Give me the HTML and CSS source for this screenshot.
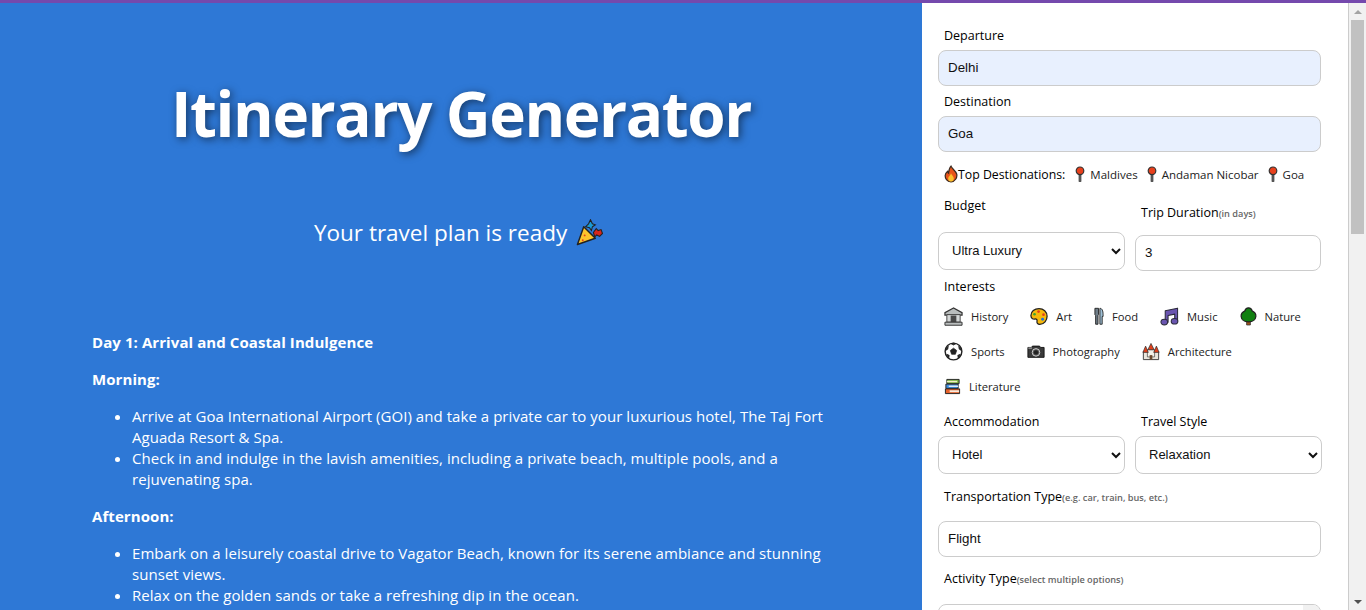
FILE: index.html
```html
<!DOCTYPE html>
<html lang="en">
<head>
<meta charset="utf-8">
<title>Itinerary Generator</title>
<link rel="stylesheet" href="styles.css">
</head>
<body>
<svg class="sprites" width="0" height="0" aria-hidden="true">
  <symbol id="flame" viewBox="0 0 16 20"><path d="M8 1c1 3 5 5 6.500 9 1 4-2 9-6.500 9S.8 15 1.500 11c.3-2 1.500-3 2.500-4 .2 1 .6 1.600 1.200 2C5.500 6 6 3 8 1z" fill="#e8541a" stroke="#3a2a20" stroke-width="1.400"/><path d="M8 9c.6 2 3.200 3.500 3.200 6S9.800 18.500 8 18.500 4.800 17.500 4.800 15 7.500 11.500 8 9z" fill="#fbc02d"/></symbol>
  <symbol id="pin" viewBox="0 0 10 16"><path d="M5 8v7" stroke="#555" stroke-width="2.800" stroke-linecap="round"/><circle cx="5" cy="4.800" r="3.800" fill="#e8401c" stroke="#333" stroke-width="1.200"/></symbol>
  <symbol id="museum" viewBox="0 0 20 20"><path d="M10 1 1 6v2.500h18V6z" fill="#b9bdbd" stroke="#333" stroke-width="1.300"/><path d="M3 8h14v8H3z" fill="#d5d8d8" stroke="#444"/><path d="M7 9h6v7H7z" fill="#4a4a4a"/><path d="M1 16h18v3.200H1z" fill="#b9bdbd" stroke="#333"/></symbol>
  <symbol id="palette" viewBox="0 0 20 20"><path d="M10 1.200C5 1.200 1 4.500 1 9c0 3 2.300 4 4.200 3.800 2.200-.2 3 .8 2.600 2.400-.4 1.700.6 3.600 3 3.600 5 0 8.200-4.400 8.200-9 0-5-4-8.600-9-8.600z" fill="#f6b80c" stroke="#222" stroke-width="1.400"/><circle cx="5" cy="7.500" r="1.500" fill="#3aa635"/><circle cx="9.500" cy="4.500" r="1.500" fill="#e2401b"/><circle cx="15" cy="8" r="1.500" fill="#e2401b"/><circle cx="14" cy="13" r="1.600" fill="#1d70d6"/></symbol>
  <symbol id="cutlery" viewBox="0 0 11 20"><path d="M1 1h4v7l-.6 1v9.500H1.800V9L1 8z" fill="#6f7d88" stroke="#222"/><path d="M6.500 1c2.500 0 3.500 3 3.500 7v2H9v8.500H6.500z" fill="#9fc0d6" stroke="#222"/></symbol>
  <symbol id="notes" viewBox="0 0 20 20"><path d="M5.500 4 18.500 1.200V15h-3V7.500l-7 1.500v7h-3z" fill="#6a55b0" stroke="#2b2b3a" stroke-width="1.100" stroke-linejoin="round"/><ellipse cx="4.500" cy="15.800" rx="3.500" ry="3" fill="#6a55b0" stroke="#2b2b3a" stroke-width="1.100"/><ellipse cx="15.300" cy="15" rx="3.500" ry="3" fill="#6a55b0" stroke="#2b2b3a" stroke-width="1.100"/></symbol>
  <symbol id="tree" viewBox="0 0 18 20"><path d="M7 14h4v5H7z" fill="#a0521d" stroke="#333" stroke-width=".8"/><path d="M9 .8c2.200 0 3.500 1.500 3.800 3.200C15 5 17 7.500 16.800 10c-.3 3-3 5.800-7.800 5.800S1.500 13 1.200 10C1 7.500 3 5 5.200 4 5.500 2.300 6.800.8 9 .8z" fill="#118011" stroke="#222" stroke-width="1.300"/></symbol>
  <symbol id="ball" viewBox="0 0 20 20"><circle cx="10" cy="10" r="8.800" fill="#fff" stroke="#222" stroke-width="1.500"/><path d="m10 6.500 3.300 2.400-1.300 4H8l-1.300-4zM7.500 1.800 10 3.200l2.500-1.400L10 1.200zM1.500 9l2.500-1.500.5-3L2.500 6.500zM18.500 9 16 7.500l-.5-3 2 2zM5 17l.5-3-2.500-1 .8 2.500zM15 17l-.5-3 2.500-1-.8 2.500z" fill="#222" stroke="#222" stroke-width=".8"/></symbol>
  <symbol id="camera" viewBox="0 0 20 16"><path d="M1 3.500h4l1-1.500h8l1 1.500h4v11H1z" fill="#3a3a3a" stroke="#111"/><path d="M1.500 3.500h4v1.500h-4z" fill="#999"/><circle cx="10" cy="9" r="4.200" fill="#555" stroke="#ddd" stroke-width="1"/><circle cx="10" cy="9" r="2.400" fill="#222"/></symbol>
  <symbol id="castle" viewBox="0 0 20 20"><path d="M1.500 10h17v9h-17z" fill="#e9e6dc" stroke="#333"/><path d="M6 8h8v8H6z" fill="#f4f2ea" stroke="#333" stroke-width=".7"/><path d="M8.500 14h3v5h-3z" fill="#6b4a2e"/><path d="M10 1 6.500 8h7zM4 4 1 11h6zM16 4l-3 7h6z" fill="#e2401b" stroke="#333" stroke-width=".8"/></symbol>
  <symbol id="books" viewBox="0 0 18 18"><path d="M3 1.500h13V6H3z" fill="#7cb342" stroke="#222"/><path d="M3 3h11v1.500H3z" fill="#f3efc8"/><path d="M2 6.500h13V11H2z" fill="#3d8fe0" stroke="#222"/><path d="M5 8h10v1.500H5z" fill="#e8eef5"/><path d="M1.500 11.500h15v5h-15z" fill="#e8622a" stroke="#222"/><path d="M6 13h10v2H6z" fill="#f6ece0"/></symbol>
  <symbol id="popper" viewBox="0 0 28 28"><path d="M1.500 26.500 8 8l12 12z" fill="#fcc52c" stroke="#222" stroke-width="1.500" stroke-linejoin="round"/><path d="m15 .8 2 4.200 3 1-3 2-1 4-2-3-4-1 3-3z" fill="#1a9ad6" stroke="#222" stroke-width="1.100"/><path d="m18 14 3-4 2 2 3-1 1.500 4-3 3-3-1.500-2 2z" fill="#d8261c" stroke="#222" stroke-width="1.100"/><circle cx="9" cy="17" r="1" fill="#e2401b"/><circle cx="7" cy="22" r="1" fill="#e2401b"/></symbol>
</svg>
<div class="topbar"></div>
<main class="layout">
  <section class="result">
    <h1 class="title">Itinerary Generator</h1>
    <h2 class="subtitle">Your travel plan is ready <svg class="popper"><use href="#popper"/></svg></h2>
    <div class="plan">
      <p><strong>Day 1: Arrival and Coastal Indulgence</strong></p>
      <p><strong>Morning:</strong></p>
      <ul>
        <li>Arrive at Goa International Airport (GOI) and take a private car to your luxurious hotel, The Taj Fort Aguada Resort &amp; Spa.</li>
        <li>Check in and indulge in the lavish amenities, including a private beach, multiple pools, and a rejuvenating spa.</li>
      </ul>
      <p><strong>Afternoon:</strong></p>
      <ul>
        <li>Embark on a leisurely coastal drive to Vagator Beach, known for its serene ambiance and stunning sunset views.</li>
        <li>Relax on the golden sands or take a refreshing dip in the ocean.</li>
      </ul>
    </div>
  </section>
  <aside class="panel">
    <form class="form">
      <label class="label">Departure</label>
      <input class="field filled" value="Delhi">
      <label class="label">Destination</label>
      <input class="field filled" value="Goa">
      <div class="top">
        <svg class="flame"><use href="#flame"/></svg><span class="top-title">Top Destionations:</span>
        <span class="top-item"><svg class="pin"><use href="#pin"/></svg>Maldives</span>
        <span class="top-item"><svg class="pin"><use href="#pin"/></svg>Andaman Nicobar</span>
        <span class="top-item"><svg class="pin"><use href="#pin"/></svg>Goa</span>
      </div>
      <div class="pair">
        <div>
          <label class="label flush budget-label">Budget</label>
          <select class="field select"><option>Ultra Luxury</option></select>
        </div>
        <div class="duration">
          <label class="label flush duration-label">Trip Duration<small>(in days)</small></label>
          <input class="field number" value="3">
        </div>
      </div>
      <label class="label">Interests</label>
      <div class="chips">
        <span class="chip"><svg class="ico"><use href="#museum"/></svg>History</span>
        <span class="chip"><svg class="ico w18"><use href="#palette"/></svg>Art</span>
        <span class="chip"><svg class="ico w10"><use href="#cutlery"/></svg>Food</span>
        <span class="chip"><svg class="ico"><use href="#notes"/></svg>Music</span>
        <span class="chip"><svg class="ico w17"><use href="#tree"/></svg>Nature</span>
        <span class="chip"><svg class="ico"><use href="#ball"/></svg>Sports</span>
        <span class="chip"><svg class="ico w18"><use href="#camera"/></svg>Photography</span>
        <span class="chip"><svg class="ico w18"><use href="#castle"/></svg>Architecture</span>
        <span class="chip"><svg class="ico w17"><use href="#books"/></svg>Literature</span>
      </div>
      <div class="pair stay">
        <div>
          <label class="label flush stay-label">Accommodation</label>
          <select class="field select"><option>Hotel</option></select>
        </div>
        <div>
          <label class="label flush stay-label">Travel Style</label>
          <select class="field select"><option>Relaxation</option></select>
        </div>
      </div>
      <label class="label spaced">Transportation Type<small>(e.g. car, train, bus, etc.)</small></label>
      <input class="field" value="Flight">
      <label class="label activity">Activity Type<small>(select multiple options)</small></label>
      <div class="multi">
        <div class="multi-list"></div>
        <div class="multi-bar"></div>
      </div>
    </form>
  </aside>
  <div class="scrollbar" aria-hidden="true">
    <div class="sb-btn"><span class="sb-up"></span></div>
    <div class="sb-thumb"></div>
    <div class="sb-rest"></div>
    <div class="sb-btn"><span class="sb-down"></span></div>
  </div>
</main>
</body>
</html>
```
FILE: styles.css
```css
* { box-sizing: border-box; }
html, body { height: 100%; }
body {
  margin: 0;
  display: flex;
  flex-direction: column;
  overflow: hidden;
  font-family: "Open Sans", "Noto Sans", sans-serif;
  color: #111;
}
.sprites { position: absolute; }
.topbar {
  flex: 0 0 3px;
  background: #7549ad;
}
.layout { flex: 1; min-height: 0; display: flex; }

.result {
  flex: 0 0 922px;
  overflow: hidden;
  background: #2e78d6;
  color: #fff;
  padding-top: 70px;
}
.title {
  margin: 0;
  text-align: center;
  font-size: 62px;
  line-height: 80px;
  font-weight: 700;
  letter-spacing: -1.400px;
  text-shadow: 2px 2px 8px rgba(0, 0, 0, .55);
}
.subtitle {
  margin: 64px 0 0;
  padding-right: 5px;
  text-align: center;
  font-size: 22.500px;
  line-height: 32px;
  font-weight: 400;
}
.popper { width: 27px; height: 27px; margin-left: 3px; vertical-align: -5px; }
.plan {
  margin-top: 83px;
  padding: 0 92px;
  font-size: 15px;
  line-height: 21px;
  letter-spacing: .05px;
}
.plan strong { letter-spacing: .08px; }
.plan p { margin: 16px 0; }
.plan ul { margin: 16px 0; padding-left: 40px; }

.panel {
  flex: 1;
  min-width: 0;
  background: #fff;
  overflow: hidden;
}
.scrollbar {
  flex: 0 0 18px;
  display: flex;
  flex-direction: column;
  background: #f1f1f1;
  border-left: 1px solid #ccc;
}
.sb-btn {
  flex: 0 0 17px;
  display: flex;
  align-items: center;
  justify-content: center;
}
.sb-up, .sb-down {
  border-left: 4px solid transparent;
  border-right: 4px solid transparent;
}
.sb-up { border-bottom: 4px solid #a3a3a3; }
.sb-down { border-top: 4px solid #505050; }
.sb-thumb {
  flex: 0 0 214px;
  margin: 0 2px;
  background: #c1c1c1;
}
.sb-rest { flex: 1; }

.form { padding: 17px 27px 0 16px; }
.label {
  display: block;
  margin: 7px 0 5px;
  padding-left: 6px;
  font-size: 12.500px;
  line-height: 18px;
  font-weight: 500;
  color: #000;
}
.label small {
  font-size: 9.200px;
  font-weight: 600;
  color: #666;
}
.flush { margin-top: 0; }
.field {
  display: block;
  width: 100%;
  height: 36px;
  border: 1px solid #ccc;
  border-radius: 8px;
  padding: 0 9px 2px;
  background: #fff;
  color: #111;
  font: 13.333px "Liberation Sans", Arial, sans-serif;
}
.filled { background: #e8f0fe; }
.top {
  display: flex;
  align-items: center;
  height: 20px;
  margin: 12px 0;
  padding-left: 6px;
}
.flame { width: 14px; height: 18px; }
.top-title { font-size: 12.300px; font-weight: 500; color: #000; margin-right: 10px; }
.top-item { display: flex; align-items: center; font-size: 11.500px; margin-right: 9px; color: #222; }
.pin { width: 10px; height: 16px; margin-right: 5px; }
.pair {
  display: grid;
  grid-template-columns: 187px 187px;
  gap: 10px;
  margin-top: 12px;
}
.budget-label { margin-bottom: 17px; padding-top: 1px; }
.duration { padding-top: 8px; }
.duration-label { margin-bottom: 12px; }
.select { height: 38px; padding-left: 9px; font-size: 13px; }
.number { width: 186px; padding-left: 9px; }
.chips {
  display: flex;
  flex-wrap: wrap;
  gap: 15px 22px;
  margin-top: 10px;
  padding-left: 6px;
}
.chip {
  display: flex;
  align-items: center;
  gap: 8px;
  height: 20px;
  font-size: 11.200px;
  color: #222;
}
.ico { width: 19px; height: 19px; }
.w18 { width: 18px; }
.w17 { width: 17px; }
.w10 { width: 10px; }
.stay { margin-top: 17px; }
.stay-label { margin-bottom: 5px; }
.spaced { margin: 14px 0; }
.activity { margin: 13px 0 15px; }
.multi {
  display: flex;
  height: 120px;
  border: 1px solid #ccc;
  border-radius: 8px;
  overflow: hidden;
}
.multi-list { flex: 1; }
.multi-bar { flex: 0 0 17px; background: #f1f1f1; }
```
